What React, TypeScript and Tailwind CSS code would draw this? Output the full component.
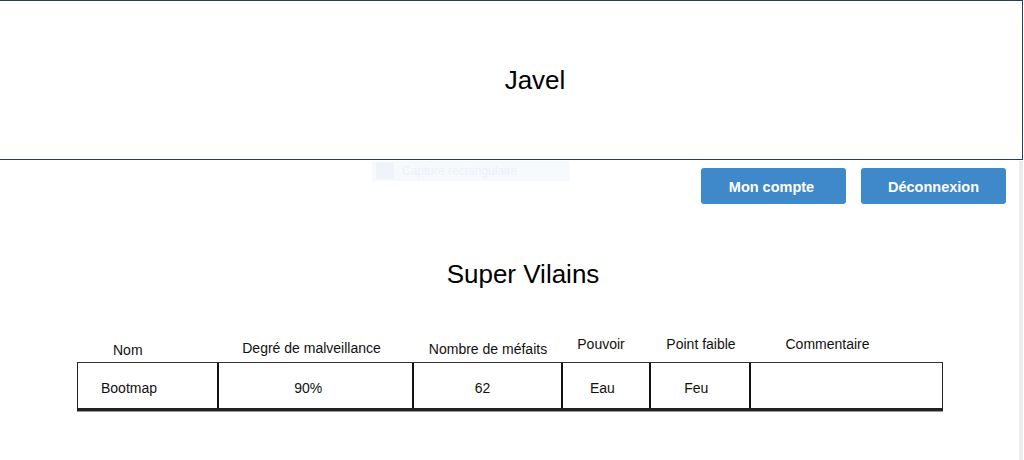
const COLUMNS = [
  { label: 'Nom', value: 'Bootmap', cell: 'w-[141px] pl-[23px]', head: 'w-[141px] pl-[36px] pt-[10px]' },
  { label: 'Degré de malveillance', value: '90%', cell: 'w-[195px] justify-center pr-[14px]', head: 'w-[195px] justify-center pr-[8px] pt-[8px]' },
  { label: 'Nombre de méfaits', value: '62', cell: 'w-[150px] justify-center pr-[10px]', head: 'w-[150px] justify-center pt-[9px]' },
  { label: 'Pouvoir', value: 'Eau', cell: 'w-[88px] justify-center pr-[8px]', head: 'w-[88px] justify-center pr-[12px] pt-[4px]' },
  { label: 'Point faible', value: 'Feu', cell: 'w-[100px] justify-center pr-[8px]', head: 'w-[100px] justify-center pt-[4px]' },
  { label: 'Commentaire', value: '', cell: 'w-[191px]', head: 'w-[191px] justify-center pr-[38px] pt-[4px]' },
];

export default function App() {
  return (
    <div className="relative h-[460px] w-[1024px] overflow-hidden bg-white font-['Liberation_Sans',Arial,sans-serif] text-[#111]">
      {/* Header */}
      <header className="ml-[-1px] flex h-[160px] w-[1024px] items-center justify-center border border-[#2d3a5a] pl-[48px]">
        <h1 className="text-[26px] leading-none text-black">Javel</h1>
      </header>

      {/* faint capture ghost */}
      <div className="absolute left-[372px] top-[161px] flex h-[20px] w-[198px] items-center gap-2 bg-[#f7fafd] px-1">
        <span className="h-[16px] w-[18px] bg-[#f0f4fa]" />
        <span className="text-[12px] text-[#edf1f7]">Capture rectangulaire</span>
      </div>

      {/* scrollbar edge */}
      <div className="absolute right-[1px] top-[161px] h-[300px] w-[4px] bg-[#ececec]" />

      {/* Actions */}
      <div className="mt-2 flex justify-end gap-[15px] pr-[18px]">
        <button className="h-[36px] w-[145px] rounded-[3px] bg-[#3f88c9] pr-[4px] pt-[3px] text-[14.5px] font-bold text-white">
          Mon compte
        </button>
        <button className="h-[36px] w-[145px] rounded-[3px] bg-[#3f88c9] pt-[3px] text-[14.5px] font-bold text-white">
          Déconnexion
        </button>
      </div>

      {/* Title */}
      <h2 className="mt-[55px] pl-[22px] text-center text-[26px] leading-[30px] text-black">Super Vilains</h2>

      {/* Table */}
      <div className="ml-[77px] mt-[43px] w-[866px]">
        <div className="flex h-[30px]">
          {COLUMNS.map((c) => (
            <div key={c.label} className={`flex text-[14px] leading-4 ${c.head}`}>
              {c.label}
            </div>
          ))}
        </div>
        <div className="flex h-[49px] border-x border-t border-b-[3px] border-x-[#222] border-t-[#333] border-b-[#222] shadow-[0_1px_0_#9a9a9a]">
          {COLUMNS.map((c, i) => (
            <div
              key={c.label}
              className={`flex items-center pt-[5px] text-[14px] ${c.cell} ${i < COLUMNS.length - 1 ? 'border-r-2 border-[#111]' : ''}`}
            >
              {c.value}
            </div>
          ))}
        </div>
      </div>
    </div>
  );
}
